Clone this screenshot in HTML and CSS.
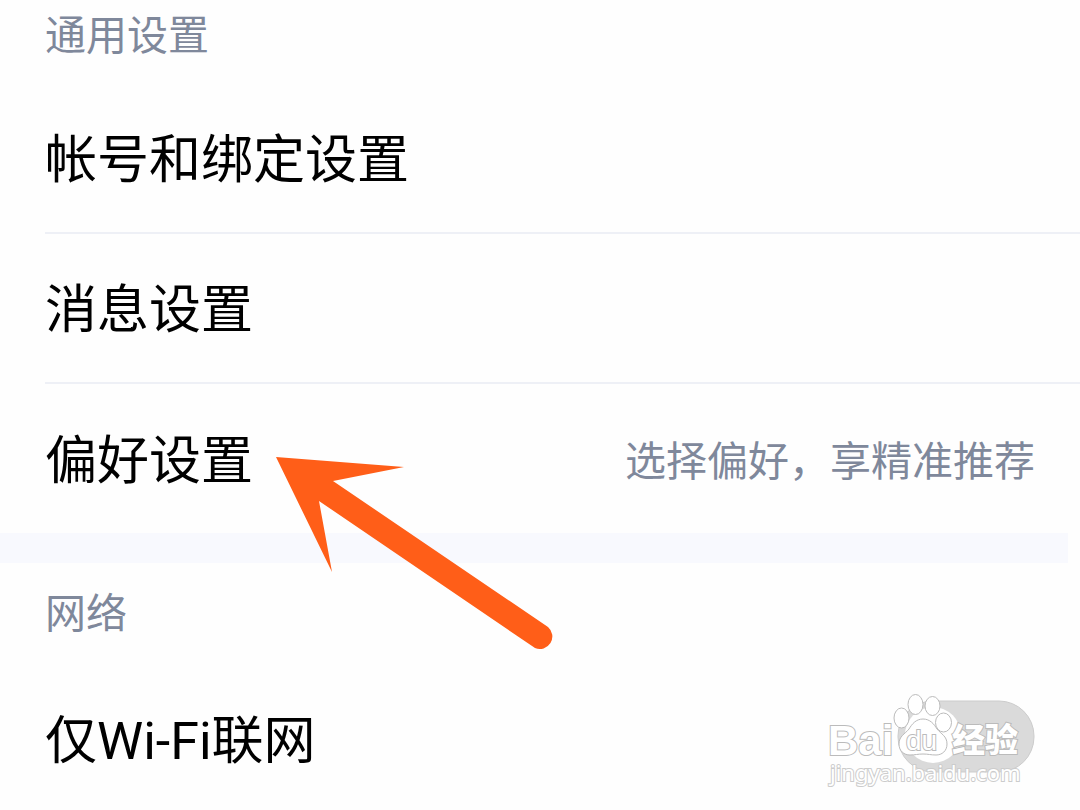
FILE: index.html
```html
<!DOCTYPE html>
<html lang="zh-CN">

<head>
    <meta charset="UTF-8">
    <meta name="viewport" content="width=device-width, initial-scale=1.0">
    <title>设置</title>
    <link rel="stylesheet" href="styles.css">
</head>

<body>
    <main class="settings">
        <section class="group">
            <h2 class="group-title">通用设置</h2>
            <nav class="list">
                <a class="row" href="#account">帐号和绑定设置</a>
                <a class="row" href="#message">消息设置</a>
                <a class="row" href="#preference">
                    偏好设置
                    <span class="hint">选择偏好，享精准推荐</span>
                </a>
            </nav>
        </section>

        <div class="separator"></div>

        <section class="group">
            <h2 class="group-title">网络</h2>
            <nav class="list">
                <a class="row" href="#wifi">仅Wi-Fi联网</a>
            </nav>
        </section>

        <!-- Pointer to the preference row -->
        <svg class="pointer" width="280" height="196" viewBox="275 456 280 196" aria-hidden="true">
            <path d="M276 457L404 467L333 481L548 627A12.5 12.5 0 0 1 535 648L319 501L332 572Z" />
        </svg>

        <!-- Watermark -->
        <svg class="watermark" width="250" height="125" viewBox="0 0 250 125" aria-label="Baidu 经验">
            <rect class="pill" x="88" y="21" width="136" height="71" rx="35" />
            <circle class="halo" cx="123" cy="55" r="28" />
            <g class="outlined">
                <ellipse cx="91.5" cy="38" rx="7.5" ry="10" />
                <ellipse cx="105.5" cy="24.5" rx="7.5" ry="10" />
                <ellipse cx="122.5" cy="26" rx="7.5" ry="9.5" />
                <ellipse cx="133.5" cy="42.5" rx="8" ry="9.5" />
                <path d="M113 39C106 39 102 44 99 49C95 54 89 56 89 64C89 71 94 75 100 75C105 75 108 74 113 74C118 74 121 75 126 75C132 75 137 71 137 64C137 56 131 54 127 49C124 44 120 39 113 39Z" />
            </g>
            <text class="brand" x="18" y="75">Bai</text>
            <text class="brand-du" x="96" y="70">du</text>
            <text class="brand-cn" x="142" y="72">经验</text>
            <text class="site" x="20" y="101">jingyan.baidu.com</text>
        </svg>
    </main>
</body>

</html>
```
FILE: styles.css
```css
:root {
    --text-color: #000;
    --muted-color: #7f889b;
    --line-color: #eef0f6;
    --band-color: #f8f9fe;
    --pointer-color: #ff5e18;
}

* {
    margin: 0;
    padding: 0;
    box-sizing: border-box;
}

body {
    font-family: Roboto, "Noto Sans CJK SC", sans-serif;
    color: var(--text-color);
    background-color: #fefefe;
}

.settings {
    position: relative;
    height: 100vh;
    overflow: hidden;
}

.group-title {
    padding: 21px 45px 20px;
    font-size: 41px;
    font-weight: 400;
    line-height: 60px;
    color: var(--muted-color);
}

/* The first title is partly scrolled away */
.group:first-child .group-title {
    padding: 6px 45px 18px;
}

.list {
    padding-left: 45px;
}

.row {
    display: flex;
    align-items: center;
    justify-content: space-between;
    height: 150px;
    padding: 6px 45px 0 0;
    border-bottom: 2px solid var(--line-color);
    font-size: 52px;
    line-height: 72px;
    color: inherit;
    text-decoration: none;
}

.row:last-child {
    height: 149px;
    border-bottom: none;
}

.hint {
    font-size: 41px;
    color: var(--muted-color);
}

.separator {
    height: 30px;
    margin-right: 12px;
    background-color: var(--band-color);
}

.pointer {
    position: absolute;
    top: 456px;
    left: 275px;
    fill: var(--pointer-color);
}

.watermark {
    position: absolute;
    right: 20px;
    bottom: 5px;
}

.pill {
    fill: #dadada;
    stroke: #cccccc;
}

.halo {
    fill: #fff;
}

.outlined {
    fill: #fff;
    stroke: #bbb;
    stroke-width: 1px;
}

.brand,
.brand-du,
.brand-cn,
.site {
    fill: #fff;
    stroke: #bbb;
    stroke-width: 2px;
    paint-order: stroke;
}

.brand {
    font: 700 42px "Liberation Sans", sans-serif;
}

.brand-du {
    font: 400 28px "Liberation Sans", sans-serif;
}

.brand-cn {
    font: 900 33px "Noto Sans CJK SC", sans-serif;
}

.site {
    font: 400 22px "Noto Sans", sans-serif;
    stroke: #ccc;
}
```
